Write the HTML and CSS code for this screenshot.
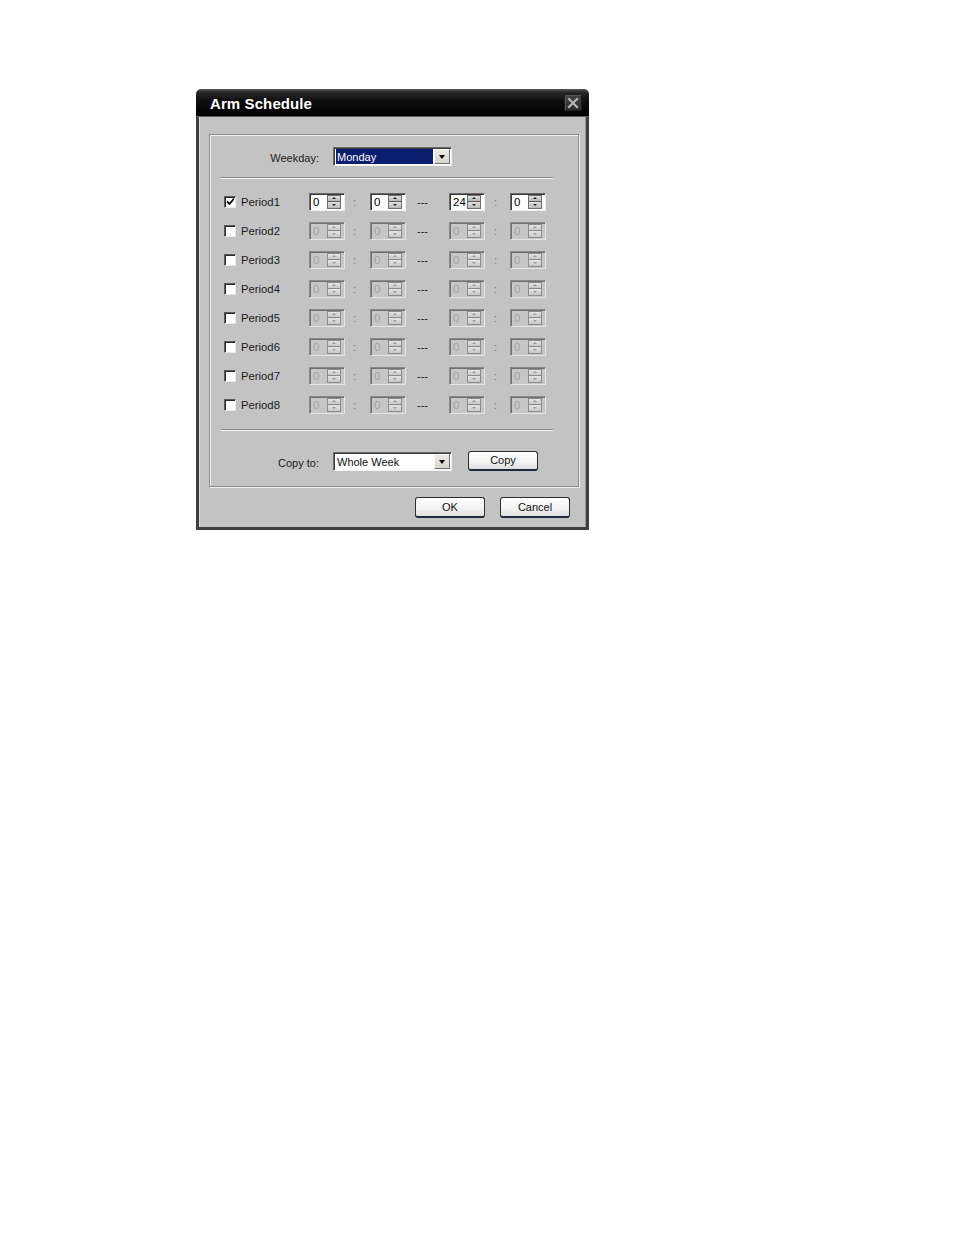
FILE: index.html
```html
<!DOCTYPE html>
<html>
<head>
<meta charset="utf-8">
<title>Arm Schedule</title>
<link rel="stylesheet" href="styles.css">
</head>
<body>
<div class="page">
  <div class="dialog">
    <div class="titlebar">
      <span class="title">Arm Schedule</span>
      <span class="close"><svg width="12" height="12" viewBox="0 0 12 12"><path d="M2 2 L10 10 M10 2 L2 10" stroke="#b4b4b4" stroke-width="2.2" stroke-linecap="square"/></svg></span>
    </div>
    <div class="body">
      <div class="group">
        <div class="field-row">
          <span class="field-label">Weekday:</span>
          <div class="select selected"><span class="select-text">Monday</span><span class="select-btn"><span class="tri"></span></span></div>
        </div>
        <div class="sep sep-top"></div>
        <div class="periods">
          <div class="prow">
            <label class="pcheck"><span class="box checked"><svg width="9" height="9" viewBox="0 0 9 9"><path d="M1 4.5 L3.5 7 L8 1.5" stroke="#000" stroke-width="1.8" fill="none"/></svg></span>Period1</label>
            <div class="spin"><span class="val">0</span><span class="arrows"><span class="up"></span><span class="down"></span></span></div>
            <span class="colon c1">:</span>
            <div class="spin"><span class="val">0</span><span class="arrows"><span class="up"></span><span class="down"></span></span></div>
            <span class="dash">---</span>
            <div class="spin"><span class="val">24</span><span class="arrows"><span class="up"></span><span class="down"></span></span></div>
            <span class="colon c2">:</span>
            <div class="spin"><span class="val">0</span><span class="arrows"><span class="up"></span><span class="down"></span></span></div>
          </div>
          <div class="prow">
            <label class="pcheck"><span class="box"></span>Period2</label>
            <div class="spin off"><span class="val">0</span><span class="arrows"><span class="up"></span><span class="down"></span></span></div>
            <span class="colon c1">:</span>
            <div class="spin off"><span class="val">0</span><span class="arrows"><span class="up"></span><span class="down"></span></span></div>
            <span class="dash">---</span>
            <div class="spin off"><span class="val">0</span><span class="arrows"><span class="up"></span><span class="down"></span></span></div>
            <span class="colon c2">:</span>
            <div class="spin off"><span class="val">0</span><span class="arrows"><span class="up"></span><span class="down"></span></span></div>
          </div>
          <div class="prow">
            <label class="pcheck"><span class="box"></span>Period3</label>
            <div class="spin off"><span class="val">0</span><span class="arrows"><span class="up"></span><span class="down"></span></span></div>
            <span class="colon c1">:</span>
            <div class="spin off"><span class="val">0</span><span class="arrows"><span class="up"></span><span class="down"></span></span></div>
            <span class="dash">---</span>
            <div class="spin off"><span class="val">0</span><span class="arrows"><span class="up"></span><span class="down"></span></span></div>
            <span class="colon c2">:</span>
            <div class="spin off"><span class="val">0</span><span class="arrows"><span class="up"></span><span class="down"></span></span></div>
          </div>
          <div class="prow">
            <label class="pcheck"><span class="box"></span>Period4</label>
            <div class="spin off"><span class="val">0</span><span class="arrows"><span class="up"></span><span class="down"></span></span></div>
            <span class="colon c1">:</span>
            <div class="spin off"><span class="val">0</span><span class="arrows"><span class="up"></span><span class="down"></span></span></div>
            <span class="dash">---</span>
            <div class="spin off"><span class="val">0</span><span class="arrows"><span class="up"></span><span class="down"></span></span></div>
            <span class="colon c2">:</span>
            <div class="spin off"><span class="val">0</span><span class="arrows"><span class="up"></span><span class="down"></span></span></div>
          </div>
          <div class="prow">
            <label class="pcheck"><span class="box"></span>Period5</label>
            <div class="spin off"><span class="val">0</span><span class="arrows"><span class="up"></span><span class="down"></span></span></div>
            <span class="colon c1">:</span>
            <div class="spin off"><span class="val">0</span><span class="arrows"><span class="up"></span><span class="down"></span></span></div>
            <span class="dash">---</span>
            <div class="spin off"><span class="val">0</span><span class="arrows"><span class="up"></span><span class="down"></span></span></div>
            <span class="colon c2">:</span>
            <div class="spin off"><span class="val">0</span><span class="arrows"><span class="up"></span><span class="down"></span></span></div>
          </div>
          <div class="prow">
            <label class="pcheck"><span class="box"></span>Period6</label>
            <div class="spin off"><span class="val">0</span><span class="arrows"><span class="up"></span><span class="down"></span></span></div>
            <span class="colon c1">:</span>
            <div class="spin off"><span class="val">0</span><span class="arrows"><span class="up"></span><span class="down"></span></span></div>
            <span class="dash">---</span>
            <div class="spin off"><span class="val">0</span><span class="arrows"><span class="up"></span><span class="down"></span></span></div>
            <span class="colon c2">:</span>
            <div class="spin off"><span class="val">0</span><span class="arrows"><span class="up"></span><span class="down"></span></span></div>
          </div>
          <div class="prow">
            <label class="pcheck"><span class="box"></span>Period7</label>
            <div class="spin off"><span class="val">0</span><span class="arrows"><span class="up"></span><span class="down"></span></span></div>
            <span class="colon c1">:</span>
            <div class="spin off"><span class="val">0</span><span class="arrows"><span class="up"></span><span class="down"></span></span></div>
            <span class="dash">---</span>
            <div class="spin off"><span class="val">0</span><span class="arrows"><span class="up"></span><span class="down"></span></span></div>
            <span class="colon c2">:</span>
            <div class="spin off"><span class="val">0</span><span class="arrows"><span class="up"></span><span class="down"></span></span></div>
          </div>
          <div class="prow">
            <label class="pcheck"><span class="box"></span>Period8</label>
            <div class="spin off"><span class="val">0</span><span class="arrows"><span class="up"></span><span class="down"></span></span></div>
            <span class="colon c1">:</span>
            <div class="spin off"><span class="val">0</span><span class="arrows"><span class="up"></span><span class="down"></span></span></div>
            <span class="dash">---</span>
            <div class="spin off"><span class="val">0</span><span class="arrows"><span class="up"></span><span class="down"></span></span></div>
            <span class="colon c2">:</span>
            <div class="spin off"><span class="val">0</span><span class="arrows"><span class="up"></span><span class="down"></span></span></div>
          </div>
        </div>
        <div class="sep sep-bottom"></div>
        <div class="field-row copy-row">
          <span class="field-label">Copy to:</span>
          <div class="select"><span class="select-text">Whole Week</span><span class="select-btn"><span class="tri"></span></span></div>
          <button class="btn btn-copy">Copy</button>
        </div>
      </div>
      <div class="actions">
        <button class="btn">OK</button>
        <button class="btn">Cancel</button>
      </div>
    </div>
  </div>
</div>
</body>
</html>
```

FILE: styles.css
```css
* { box-sizing: border-box; }
html, body { margin: 0; padding: 0; background: #fff; }
body { font-family: "Liberation Sans", Arial, sans-serif; font-size: 11px; color: #1c1c1c; }

.page { padding: 89px 0 0 196px; }

.dialog { width: 393px; display: flex; flex-direction: column; }

.titlebar {
  height: 28px;
  display: flex;
  align-items: center;
  justify-content: space-between;
  padding: 0 7px 0 14px;
  border-radius: 5px 5px 0 0;
  background: linear-gradient(#5a5a5a 0px, #2a2a2a 3px, #0e0e0e 12px, #000 100%);
  border-bottom: 1px solid #5c5c5c;
}
.title { color: #fff; font-weight: bold; font-size: 15px; letter-spacing: 0.1px; padding-top: 1px; }
.close {
  width: 18px; height: 17px;
  display: flex; align-items: center; justify-content: center;
  background: linear-gradient(#444, #2c2c2c);
  border: 1px solid #1a1a1a;
  box-shadow: inset 1px 1px 0 #585858;
}

.body {
  background: #c3c3c3;
  border: 3px solid #404040;
  border-top: none;
  box-shadow: inset 1px 0 0 #dcdcdc, inset -1px 0 0 #9a9a9a;
  padding: 17px 7px 9px 10px;
  display: flex;
  flex-direction: column;
}

.group {
  border: 1px solid #8c8c8c;
  box-shadow: inset 1px 1px 0 #f2f2f2, 1px 1px 0 #f2f2f2;
  padding: 12px 0 15px 11px;
  display: flex;
  flex-direction: column;
}

.field-row { display: flex; align-items: center; height: 19px; width: 332px; }
.field-label { width: 99px; text-align: right; padding-right: 1px; margin-right: 13px; padding-top: 2px; color: #1c1c1c; }

.select {
  width: 119px; height: 19px;
  display: flex;
  background: #fff;
  border: 1px solid;
  border-color: #6a6a6a #f4f4f4 #f4f4f4 #6a6a6a;
  box-shadow: inset 1px 1px 0 #3a3a3a;
  padding: 1px 1px 1px 2px;
}
.select-text { flex: 1; padding-left: 1px; line-height: 16px; color: #111; }
.select.selected .select-text { background: #0b1d6e; color: #fff; }
.select-btn {
  width: 16px;
  display: flex; align-items: center; justify-content: center;
  background: linear-gradient(#ecebe4, #d6d4cc);
  border: 1px solid;
  border-color: #fafafa #707070 #707070 #fafafa;
  margin-left: 1px;
}
.tri { width: 0; height: 0; border-left: 3.5px solid transparent; border-right: 3.5px solid transparent; border-top: 4px solid #000; }

.sep { width: 332px; height: 2px; border-top: 1px solid #8c8c8c; border-bottom: 1px solid #f2f2f2; }
.sep-top { margin-top: 11px; }
.sep-bottom { margin-top: 10px; }

.periods { margin-top: 8px; display: flex; flex-direction: column; }
.prow {
  height: 29px;
  display: grid;
  grid-template-columns: 88px 36px 25px 36px 43px 36px 25px 36px;
  align-items: center;
}
.pcheck { display: flex; align-items: center; gap: 5px; padding-left: 3px; color: #1c1c1c; font-size: 11.3px; }
.box {
  width: 12px; height: 12px;
  background: #fff;
  border: 1px solid;
  border-color: #5a5a5a #e8e8e8 #e8e8e8 #5a5a5a;
  box-shadow: inset 1px 1px 0 #2a2a2a;
  display: flex; align-items: center; justify-content: center;
}

.spin {
  height: 18px;
  display: flex;
  background: #fff;
  border: 1px solid;
  border-color: #6a6a6a #f0f0f0 #f0f0f0 #6a6a6a;
  box-shadow: inset 1px 1px 0 #3a3a3a;
  padding: 1px 3px 1px 3px;
}
.spin .val { flex: 1; line-height: 14px; font-size: 11.5px; color: #000; }
.spin .arrows {
  width: 14px;
  display: flex; flex-direction: column;
  border: 1px solid #6e6e6e;
  background: #bdbdbd;
}
.spin .up, .spin .down {
  flex: 1;
  display: flex; align-items: center; justify-content: center;
  background: linear-gradient(#e2e2e2, #b8b8b8);
}
.spin .up { border-bottom: 1px solid #5a5a5a; }
.spin .up::after { content: ""; border-left: 2px solid transparent; border-right: 2px solid transparent; border-bottom: 2px solid #222; }
.spin .down::after { content: ""; border-left: 2px solid transparent; border-right: 2px solid transparent; border-top: 2px solid #222; }

.spin.off { background: #c6c6c6; border-color: #8a8a8a #e6e6e6 #e6e6e6 #8a8a8a; box-shadow: inset 1px 1px 0 #707070; }
.spin.off .val { color: #a4a4a4; }
.spin.off .arrows { border-color: #8c8c8c; }
.spin.off .up, .spin.off .down { background: linear-gradient(#e4e4e4, #c8c8c8); }
.spin.off .up { border-bottom-color: #8a8a8a; }
.spin.off .up::after { border-bottom-color: #9a9a9a; }
.spin.off .down::after { border-top-color: #9a9a9a; }

.colon { color: #7a7a7a; font-size: 11px; }
.colon.c1 { padding-left: 8px; }
.colon.c2 { padding-left: 9px; }
.dash { padding-left: 11px; color: #222; }

.copy-row { margin-top: 21px; height: 19px; }

.btn {
  width: 70px; height: 21px;
  font-family: "Liberation Sans", Arial, sans-serif;
  font-size: 11px;
  color: #111;
  background: linear-gradient(#ffffff, #f2f2f2 60%, #dedede);
  border: 1px solid #2e2e2e;
  border-bottom: 2px solid #1e2a3a;
  border-radius: 3px;
  padding: 0;
}
.btn-copy { margin-left: 16px; margin-top: -2px; height: 20px; }

.actions { display: flex; justify-content: flex-end; gap: 15px; margin-top: 10px; padding-right: 9px; }
```
